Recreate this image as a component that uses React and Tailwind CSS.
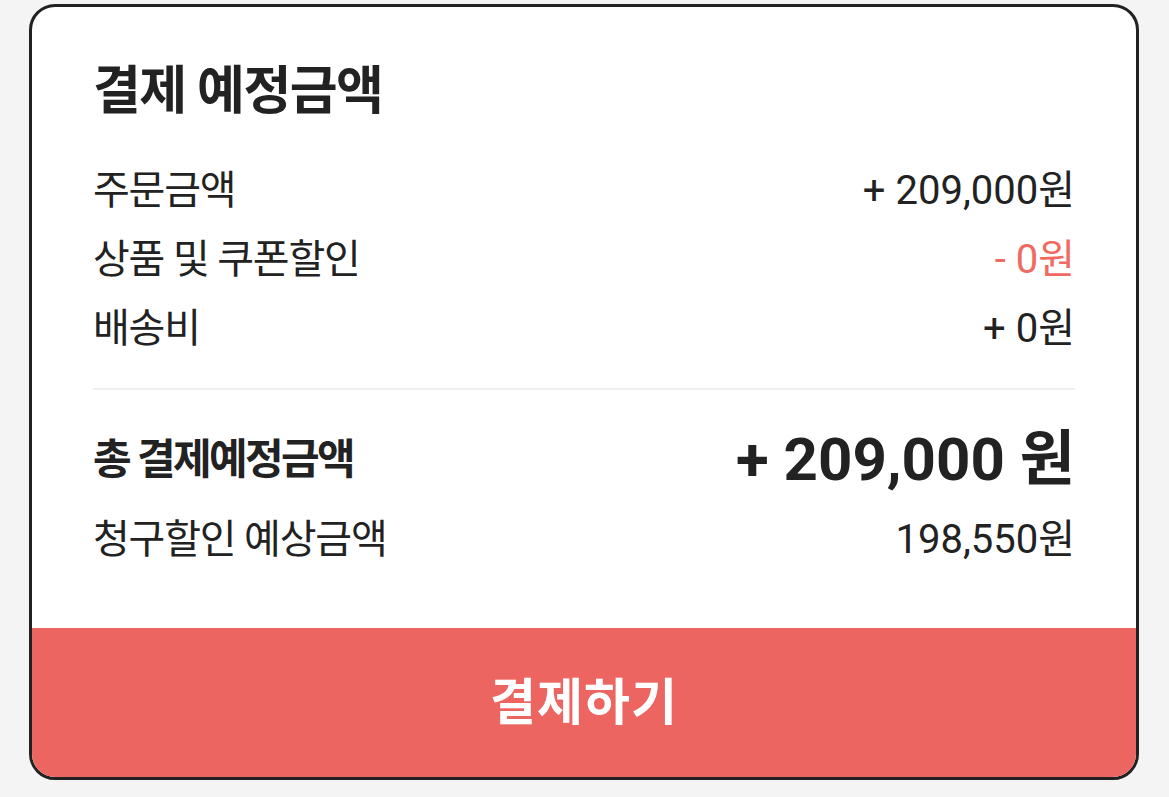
import React from 'react';

const rows = [
  { label: '주문금액', value: '+ 209,000원' },
  { label: '상품 및 쿠폰할인', value: '- 0원', red: true },
  { label: '배송비', value: '+ 0원' },
];

const Row = ({ label, value, red }) => (
  <div className="flex h-[69px] items-center justify-between">
    <span className="text-[40px] leading-none tracking-[-1.2px] text-[#222]">{label}</span>
    <span className={`text-[40px] leading-none ${red ? 'text-[#f06a62]' : 'text-[#222]'}`}>{value}</span>
  </div>
);

export default function App() {
  return (
    <div
      className="min-h-[797px] w-full bg-[#f4f4f4] pt-[4px] pl-[29px]"
      style={{ fontFamily: 'Roboto, "Noto Sans CJK KR", sans-serif' }}
    >
      <div className="w-[1110px] h-[776px] overflow-hidden rounded-[26px] border-[3px] border-[#222] bg-white flex flex-col">
        <div className="px-[61px] pt-[55px]">
          {/* title */}
          <div className="flex h-[60px] items-center">
            <h2 className="text-[52px] font-bold leading-none tracking-[-1.5px] text-[#222]">결제 예정금액</h2>
          </div>

          <div className="mt-[34px]">
            {rows.map((r, i) => (
              <Row key={i} {...r} />
            ))}
          </div>

          <div className="mt-[25px] h-[2px] bg-[#f0f0f0]" />

          {/* total */}
          <div className="mt-[30px] flex h-[80px] items-center justify-between">
            <span className="text-[42px] font-bold leading-none tracking-[-2.6px] text-[#222]">총 결제예정금액</span>
            <span className="text-[60px] font-bold leading-none text-[#222]">+ 209,000 원</span>
          </div>
          <div className="flex h-[80px] items-center justify-between">
            <span className="text-[40px] leading-none tracking-[-1.2px] text-[#222]">청구할인 예상금액</span>
            <span className="text-[40px] leading-none text-[#222]">198,550원</span>
          </div>
        </div>

        <button className="mt-auto flex h-[149px] w-full items-center justify-center bg-[#ec6560]">
          <span className="text-[50px] font-bold leading-none tracking-[1px] text-white">결제하기</span>
        </button>
      </div>
    </div>
  );
}
